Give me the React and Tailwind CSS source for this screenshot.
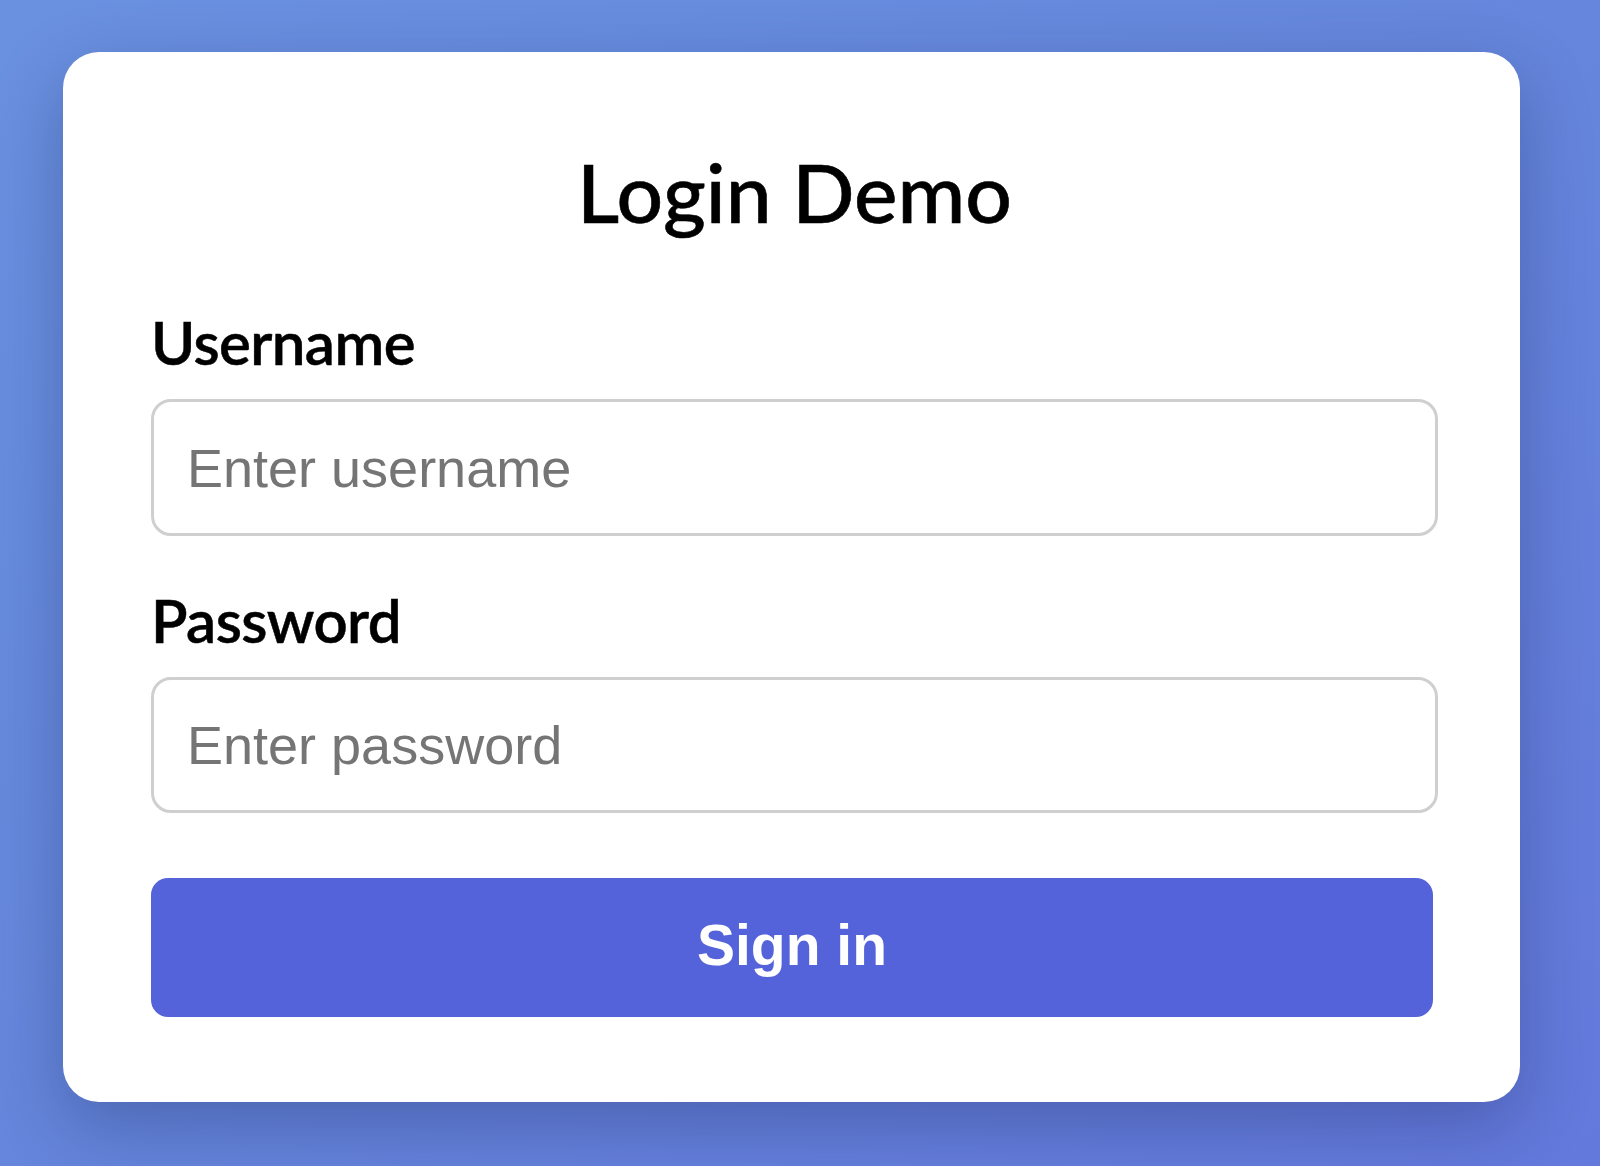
export default function App() {
  return (
    <div className="w-[1600px] h-[1166px] overflow-hidden bg-gradient-to-br from-[#6a91e0] via-[#6586dc] to-[#6479dc] pt-[52px] pl-[63px]">
      <div className="w-[1457px] h-[1050px] bg-white rounded-[36px] shadow-[0_24px_70px_rgba(20,30,80,0.3)] pt-[99px] pl-[88px] pr-[82px] pb-[85px] flex flex-col">
        <h1 className="text-center text-[82px] leading-[80px] text-black font-['Lato',sans-serif] font-medium [-webkit-text-stroke:0.6px_black]">
          Login Demo
        </h1>
        <form className="flex flex-col" onSubmit={(e) => e.preventDefault()}>
          <label
            htmlFor="username"
            className="mt-[81px] mb-[27px] text-[60px] leading-[60px] tracking-[-0.6px] font-semibold text-black font-['Lato',sans-serif] [-webkit-text-stroke:0.5px_black]"
          >
            Username
          </label>
          <input
            id="username"
            type="text"
            placeholder="Enter username"
            className="w-full h-[137px] border-[3px] border-[#cfcfcf] rounded-[20px] pl-[33px] text-[54px] font-['Liberation_Sans',Arial,sans-serif] placeholder:text-[#757575] outline-none"
          />
          <label
            htmlFor="password"
            className="mt-[54px] mb-[27px] text-[60px] leading-[60px] tracking-[-0.6px] font-semibold text-black font-['Lato',sans-serif] [-webkit-text-stroke:0.5px_black]"
          >
            Password
          </label>
          <input
            id="password"
            type="password"
            placeholder="Enter password"
            className="w-full h-[136px] border-[3px] border-[#cfcfcf] rounded-[20px] pl-[33px] text-[54px] font-['Liberation_Sans',Arial,sans-serif] placeholder:text-[#757575] outline-none"
          />
          <button
            type="submit"
            className="mt-[65px] mr-[5px] h-[139px] pb-[4px] rounded-[17px] bg-[#5563db] text-white text-[57px] font-bold font-['Liberation_Sans',Arial,sans-serif]"
          >
            Sign in
          </button>
        </form>
      </div>
    </div>
  );
}
